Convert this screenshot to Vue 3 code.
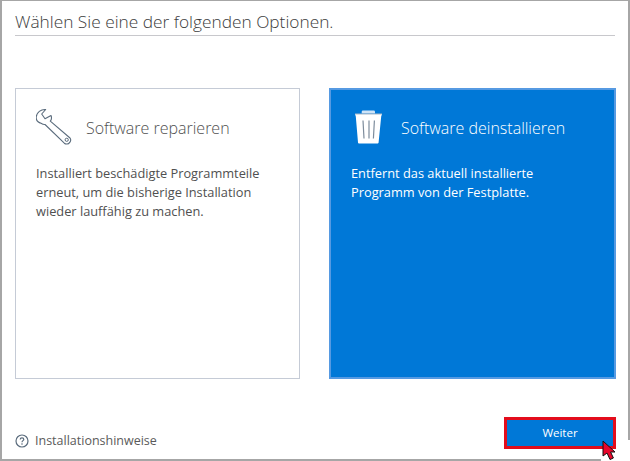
<script setup>
const options = [
  {
    key: 'repair',
    title: 'Software reparieren',
    text: ['Installiert beschädigte Programmteile', 'erneut, um die bisherige Installation', 'wieder lauffähig zu machen.'],
    selected: false,
  },
  {
    key: 'remove',
    title: 'Software deinstallieren',
    text: ['Entfernt das aktuell installierte', 'Programm von der Festplatte.'],
    selected: true,
  },
]
</script>

<template>
  <div class="window">
    <h1 class="heading">Wählen Sie eine der folgenden Optionen.</h1>

    <div class="options">
      <section v-for="opt in options" :key="opt.key" class="card" :class="{ selected: opt.selected }">
        <div class="card-head">
          <svg v-if="opt.key === 'repair'" class="icon" width="44" height="44" viewBox="0 0 44 44">
            <path d="M9.7 3.5 L5.7 8 L9 12.8 L15 9.5 C15.8 11.5 15.4 13.8 14.3 15.2 L34 32 C36 34.5 33 38.5 30.5 38 C29.4 38 28.8 37.6 28.3 37.2 L9 18.5 C7.6 18.6 6.2 18 5 17.2 C1.8 16.4 0 13.8 .2 11 C.6 6.5 5 3 9.7 3.5 Z" fill="none" stroke="#5b6c7d" stroke-width="1.1" stroke-linejoin="round"/>
            <circle cx="30.7" cy="33.8" r="1.6" fill="none" stroke="#5b6c7d" stroke-width="1"/>
          </svg>
          <svg v-else class="icon" width="44" height="44" viewBox="0 0 44 44">
            <path d="M10.7 6 C10.7 4.9 11.4 4.5 12.2 4.5 H22.5 C23.3 4.5 24 4.9 24 6 V7.5 H10.7 Z" fill="#cfe4f7"/>
            <path d="M4 8 H31 L30.2 10.5 L27.6 36.4 C27.5 37.2 27 37.5 26.2 37.5 H8.4 C7.6 37.5 7.1 37.2 7 36.4 L4.8 10.5 Z" fill="#fff"/>
            <path d="M4 8 H31" stroke="#a9b9c8" stroke-width="1"/>
            <path d="M12 14.5 L13 32.5 M18 14.5 V32.5 M23.4 14.5 L22.4 32.5" stroke="#7d8c9c" stroke-width="1.2" fill="none"/>
          </svg>
          <h2 class="card-title">{{ opt.title }}</h2>
        </div>
        <p class="card-text">
          <span v-for="line in opt.text" :key="line" class="line">{{ line }}</span>
        </p>
      </section>
    </div>

    <footer class="footer">
      <a class="hint">
        <svg width="14" height="14" viewBox="0 0 14 14">
          <circle cx="7" cy="7" r="6" fill="none" stroke="#5b6c7d" stroke-width="1.2"/>
          <path d="M5.2 5.6 C5.2 4.5 6 3.9 7 3.9 C8 3.9 8.8 4.5 8.8 5.4 C8.8 6.6 7 6.7 7 8.2" fill="none" stroke="#5b6c7d" stroke-width="1.2"/>
          <circle cx="7" cy="10" r=".8" fill="#5b6c7d"/>
        </svg>
        Installationshinweise
      </a>
      <button type="button" class="next">Weiter</button>
    </footer>

    <!-- screenshot cursor, it brings a white patch that cuts the window border -->
    <svg class="cursor" width="29" height="21" viewBox="0 0 29 21">
      <path d="M27 0 H29 V21 H0 V19 H27 Z" fill="#fff"/>
      <path d="M2 1 V16 L6 13 L9 19.5 L12.4 18 L9.6 12 H14 Z" fill="#e8062a" stroke="#111" stroke-width="1"/>
    </svg>
  </div>
</template>

<style scoped>
.window {
  position: relative;
  box-sizing: border-box;
  width: 630px;
  height: 461px;
  padding: 0 12px 10px 13px;
  background: #fff;
  border: 2px solid #a6a6a6;
  border-top-width: 1px;
  display: flex;
  flex-direction: column;
  font-family: "Open Sans", "Liberation Sans", sans-serif;
}
.heading {
  margin: 0 1px 0 0;
  height: 34px;
  line-height: 42px;
  font-size: 17.3px;
  font-weight: 300;
  color: #3c3c3c;
  border-bottom: 1px solid #c8c8cc;
  white-space: nowrap;
}
.options {
  margin-top: 52px;
  display: grid;
  grid-template-columns: 285px 287px;
  justify-content: space-between;
  height: 291px;
}
.card {
  box-sizing: border-box;
  border: 1px solid #c5cbd6;
  padding: 15px 20px;
  color: #505050;
}
.card.selected {
  background: #0078d7;
  border: 2px solid #569ae2;
  padding: 14px 20px;
  color: #fff;
}
.card-head {
  display: flex;
  align-items: center;
  height: 47px;
  gap: 6px;
}
.icon {
  flex: none;
}
.card-title {
  margin: 0;
  font-size: 16px;
  font-weight: 300;
}
.card-text {
  margin: 13px 0 0;
  font-size: 12.8px;
  line-height: 19px;
}
.line {
  display: block;
  white-space: nowrap;
}
.footer {
  margin-top: auto;
  display: flex;
  justify-content: space-between;
  align-items: center;
}
.hint {
  display: flex;
  align-items: center;
  gap: 6px;
  font-size: 12.5px;
  color: #5a5a5a;
  padding-top: 16px;
}
.next {
  box-sizing: border-box;
  width: 112px;
  height: 32px;
  background: #0078d7;
  border: 3px solid #e30d1c;
  color: #fff;
  font: 11.5px "Open Sans", "Liberation Sans", sans-serif;
}
.cursor {
  position: absolute;
  left: 599px;
  top: 439px;
}
</style>

<style>
html, body { background: #fff; overflow: hidden; }
</style>
